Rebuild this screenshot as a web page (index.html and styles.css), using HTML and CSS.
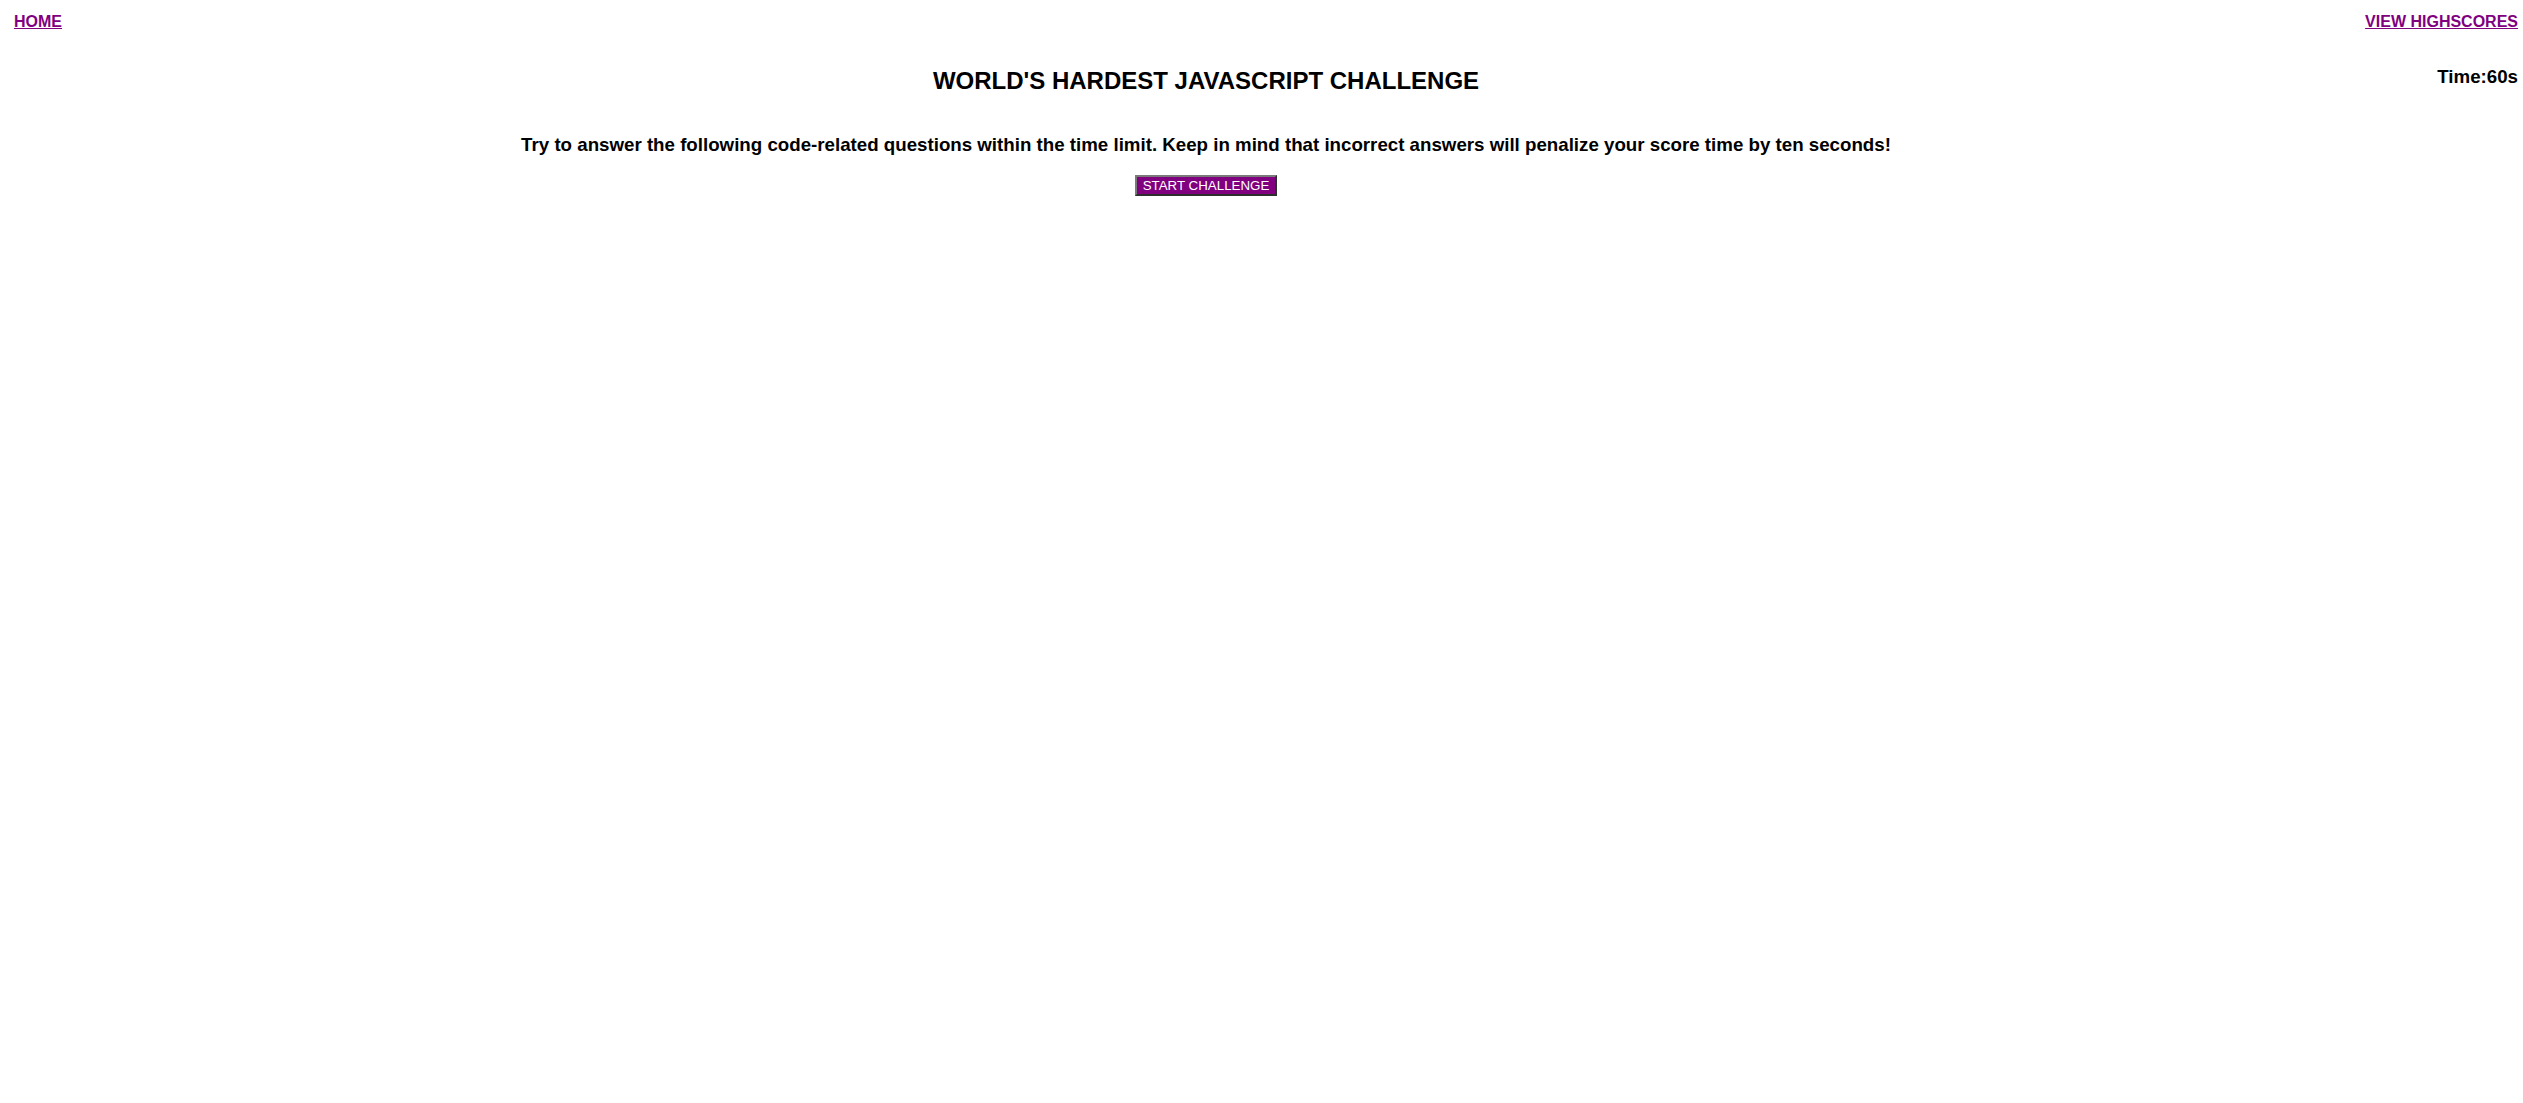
FILE: index.html
```html
<!DOCTYPE html>
<html lang="en">
<head>
<meta charset="utf-8">
<title>World's Hardest JavaScript Challenge</title>
<link rel="stylesheet" href="styles.css">
</head>
<body>
<nav class="nav">
  <a class="nav-link" href="#">HOME</a>
  <a class="nav-link" href="#">VIEW HIGHSCORES</a>
</nav>
<div class="stage">
  <main class="intro">
    <h1 class="title">WORLD'S HARDEST JAVASCRIPT CHALLENGE</h1>
    <p class="lead">Try to answer the following code-related questions within the time limit. Keep in mind that incorrect answers will penalize your score time by ten seconds!</p>
    <button class="start-btn" type="button">START CHALLENGE</button>
  </main>
  <aside class="timer">Time:60s</aside>
</div>
</body>
</html>
```
FILE: styles.css
```css
html, body {
  background: #ffffff;
}
body {
  margin: 0;
  padding: 0 5px 0 14px;
  font-family: "Liberation Sans", Arial, sans-serif;
  color: #000000;
}
.nav {
  display: flex;
  justify-content: space-between;
  padding-top: 13px;
  font-size: 16px;
  font-weight: bold;
  line-height: normal;
}
.nav-link {
  color: #800080;
  text-decoration: underline;
}
.stage {
  display: grid;
  grid-template-columns: 1fr 120px;
}
.intro {
  text-align: center;
}
.title {
  margin: 36px 0 0;
  font-size: 24px;
  font-weight: bold;
  line-height: normal;
}
.lead {
  margin: 39px 0 0;
  font-size: 18.72px;
  font-weight: bold;
  line-height: normal;
}
.start-btn {
  margin-top: 19px;
  padding: 1px 6px;
  font-family: "Liberation Sans", Arial, sans-serif;
  font-size: 13.333px;
  line-height: normal;
  color: #ffffff;
  background: #800080;
  border-width: 2px;
  border-style: solid;
  border-color: #7a7a7a #2e2e2e #2e2e2e #7a7a7a;
}
.timer {
  margin-top: 35px;
  text-align: right;
  font-size: 18.72px;
  font-weight: bold;
  line-height: normal;
}
```
